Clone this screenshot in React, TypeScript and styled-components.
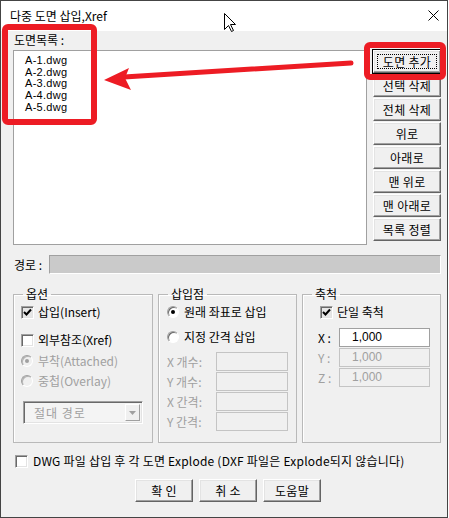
import React from "react";
import styled, { createGlobalStyle, css } from "styled-components";

const GlobalStyle = createGlobalStyle`
  html, body { margin: 0; padding: 0; background: #ffffff; }
  body {
    font-family: "Noto Sans CJK KR", "Liberation Sans", sans-serif;
    font-size: 12px;
    color: #000;
  }
  * { box-sizing: border-box; }
`;

const Window = styled.div`
  position: relative;
  width: 448px;
  height: 518px;
  border: 1px solid #444;
  background: #f0f0f0;
  display: flex;
  flex-direction: column;
  overflow: hidden;
`;

const TitleBar = styled.div`
  height: 30px;
  flex: 0 0 30px;
  background: #fff;
  display: flex;
  align-items: center;
  justify-content: space-between;
  padding: 0 8px 1px 9px;
`;

const TitleText = styled.span`
  font-size: 12px;
  line-height: 14px;
  color: #000;
`;

const Body = styled.div`
  flex: 1;
  display: flex;
  flex-direction: column;
  padding: 2px 6px 0 12px;
`;

const Label = styled.div<{ $disabled?: boolean }>`
  line-height: 14px;
  height: 14px;
  white-space: nowrap;
  color: ${(p) => (p.$disabled ? "#a0a0a0" : "#000")};
`;

const ListLabel = styled(Label)`
  margin: 0 0 3px 1px;
`;

const TopRow = styled.div`
  display: flex;
  gap: 6px;
  height: 195px;
`;

const ListBox = styled.div`
  flex: 0 0 354px;
  background: #fff;
  border: 1px solid #a0a0a0;
  padding: 3px 0 0 11px;
  font-family: "Liberation Sans", sans-serif;
  font-size: 11px;
`;

const ListItem = styled.div`
  line-height: 12px;
  height: 11.7px;
  letter-spacing: 0.3px;
`;

const ButtonColumn = styled.div`
  flex: 0 0 68px;
  display: flex;
  flex-direction: column;
  gap: 1px;
`;

const Button = styled.button<{ $focused?: boolean; $w?: number }>`
  position: relative;
  height: 23px;
  width: ${(p) => (p.$w ? `${p.$w}px` : "100%")};
  padding: 0;
  font-family: "Noto Sans CJK KR", sans-serif;
  font-size: 12px;
  letter-spacing: 0.3px;
  color: #000;
  background: #f0f0f0;
  border: 1px solid;
  border-color: #fff #646464 #646464 #fff;
  box-shadow: inset -1px -1px 0 #a0a0a0, inset 1px 1px 0 #e3e3e3;
  display: flex;
  align-items: center;
  justify-content: center;
  white-space: pre;
  ${(p) =>
    p.$focused &&
    css`
      outline: 1px solid #000;
      outline-offset: 0;
      &::after {
        content: "";
        position: absolute;
        inset: 3px;
        border: 1px dotted #000;
      }
    `}
`;

const PathRow = styled.div`
  margin-top: 10px;
  display: flex;
  align-items: center;
  height: 19px;
`;

const PathLabel = styled(Label)`
  flex: 0 0 36px;
  padding-left: 1px;
`;

const PathField = styled.div`
  flex: 1;
  height: 19px;
  background: #cacaca;
  border: 1px solid;
  border-color: #a0a0a0 #fff #fff #a0a0a0;
`;

const Groups = styled.div`
  margin-top: 13px;
  display: grid;
  grid-template-columns: 140px 139px 139px;
  column-gap: 5px;
`;

const Group = styled.fieldset`
  margin: 0;
  height: 156px;
  border: 1px solid #b9b9b9;
  box-shadow: inset 1px 1px 0 #fff;
  padding: 0;
  min-width: 0;
`;

const Legend = styled.legend`
  margin-left: 9px;
  padding: 0 3px;
  line-height: 14px;
  height: 14px;
  font-size: 12px;
`;

const GroupContent = styled.div<{ $pl: number }>`
  display: flex;
  flex-direction: column;
  align-items: flex-start;
  padding: 4px 0 0 ${(p) => p.$pl}px;
`;

const OptionRow = styled.div<{ $mt?: number; $ml?: number; $disabled?: boolean }>`
  display: flex;
  align-items: center;
  gap: 4px;
  height: 14px;
  line-height: 14px;
  white-space: nowrap;
  margin-top: ${(p) => p.$mt ?? 0}px;
  margin-left: ${(p) => p.$ml ?? 0}px;
  color: ${(p) => (p.$disabled ? "#a0a0a0" : "#000")};
`;

const RadioRow = styled(OptionRow)`
  gap: 5px;
`;

const Box = styled.span<{ $checked?: boolean }>`
  flex: 0 0 13px;
  width: 13px;
  height: 13px;
  border: 1px solid;
  border-color: #a0a0a0 #fff #fff #a0a0a0;
  box-shadow: inset 1px 1px 0 #696969, inset -1px -1px 0 #e3e3e3;
  background: ${(p) => (p.$checked ? "#e6e6e6" : "#fff")};
  display: inline-flex;
  align-items: center;
  justify-content: center;
`;

const RadioCircle = styled.span<{ $disabled?: boolean }>`
  flex: 0 0 12px;
  width: 12px;
  height: 12px;
  border-radius: 50%;
  border: 1px solid;
  border-color: #a0a0a0 #fff #fff #a0a0a0;
  box-shadow: inset 1px 1px 0 ${(p) => (p.$disabled ? "#b4b4b4" : "#696969")};
  background: ${(p) => (p.$disabled ? "#f0f0f0" : "#fff")};
  display: inline-flex;
  align-items: center;
  justify-content: center;
`;

const Dot = styled.span<{ $disabled?: boolean }>`
  width: 4px;
  height: 4px;
  border-radius: 50%;
  background: ${(p) => (p.$disabled ? "#a0a0a0" : "#000")};
`;

const Combo = styled.div`
  margin: 13px 0 0 2px;
  width: 120px;
  height: 23px;
  border: 1px solid;
  border-color: #a0a0a0 #fff #fff #a0a0a0;
  box-shadow: inset 1px 1px 0 #696969, inset -1px -1px 0 #e3e3e3;
  background: #f4f4f4;
  display: flex;
  align-items: center;
  padding: 2px;
`;

const ComboText = styled.span`
  flex: 1;
  color: #a0a0a0;
  padding-left: 8px;
  letter-spacing: 1px;
`;

const ComboButton = styled.span`
  flex: 0 0 15px;
  height: 17px;
  border: 1px solid;
  border-color: #fff #a0a0a0 #a0a0a0 #fff;
  background: #f0f0f0;
  display: flex;
  align-items: center;
  justify-content: center;
`;

const FieldGrid = styled.div<{ $mt: number; $labelW: number; $inputW: number }>`
  margin-top: ${(p) => p.$mt}px;
  display: grid;
  grid-template-columns: ${(p) => p.$labelW}px ${(p) => p.$inputW}px;
  grid-auto-rows: 19px;
  row-gap: 1px;
  align-items: center;
`;

const FieldLabel = styled.span<{ $disabled?: boolean }>`
  white-space: nowrap;
  color: ${(p) => (p.$disabled ? "#a0a0a0" : "#000")};
  font-size: 12px;
`;

const Input = styled.div<{ $disabled?: boolean }>`
  height: 19px;
  border: 1px solid ${(p) => (p.$disabled ? "#c4c4c4" : "#a0a0a0")};
  background: ${(p) => (p.$disabled ? "#f0f0f0" : "#fff")};
  color: ${(p) => (p.$disabled ? "#a0a0a0" : "#000")};
  padding-left: 12px;
  line-height: 17px;
  font-family: "Liberation Sans", sans-serif;
  font-size: 12px;
`;

const ExplodeRow = styled(OptionRow)`
  margin: 11px 0 0 2px;
  gap: 5px;
  letter-spacing: 0.22px;
`;

const ButtonRow = styled.div`
  margin-top: 11px;
  display: flex;
  justify-content: center;
  gap: 6px;
  padding-left: 2px;
`;

const Overlay = styled.svg`
  position: absolute;
  left: -1px;
  top: -1px;
  pointer-events: none;
`;

const Check = () => (
  <svg width="9" height="9" viewBox="0 0 9 9">
    <polyline points="1,4 3.5,6.5 8,1.5" fill="none" stroke="#000" strokeWidth="2" />
  </svg>
);

const CheckBox = ({ checked, label, mt, ml }: { checked?: boolean; label: string; mt?: number; ml?: number }) => (
  <OptionRow $mt={mt} $ml={ml}>
    <Box $checked={checked}>{checked && <Check />}</Box>
    <span>{label}</span>
  </OptionRow>
);

const Radio = ({ checked, disabled, label, mt }: { checked?: boolean; disabled?: boolean; label: string; mt?: number }) => (
  <RadioRow $mt={mt} $disabled={disabled}>
    <RadioCircle $disabled={disabled}>{checked && <Dot $disabled={disabled} />}</RadioCircle>
    <span>{label}</span>
  </RadioRow>
);

const files = ["A-1.dwg", "A-2.dwg", "A-3.dwg", "A-4.dwg", "A-5.dwg"];
const sideButtons = ["도면 추가", "선택 삭제", "전체 삭제", "위로", "아래로", "맨 위로", "맨 아래로", "목록 정렬"];

export default function App() {
  return (
    <>
      <GlobalStyle />
      <Window>
        <TitleBar>
          <TitleText>다중 도면 삽입,Xref</TitleText>
          <svg width="11" height="11" viewBox="0 0 11 11">
            <path d="M0.5 0.5 L10.5 10.5 M10.5 0.5 L0.5 10.5" stroke="#000" strokeWidth="1" />
          </svg>
        </TitleBar>
        <Body>
          <ListLabel>도면목록 :</ListLabel>
          <TopRow>
            <ListBox>
              {files.map((f) => (
                <ListItem key={f}>{f}</ListItem>
              ))}
            </ListBox>
            <ButtonColumn>
              {sideButtons.map((b, i) => (
                <Button key={b} $focused={i === 0}>
                  {b}
                </Button>
              ))}
            </ButtonColumn>
          </TopRow>
          <PathRow>
            <PathLabel>경로 :</PathLabel>
            <PathField />
          </PathRow>
          <Groups>
            <Group>
              <Legend>옵션</Legend>
              <GroupContent $pl={7}>
                <CheckBox checked label="삽입(Insert)" />
                <CheckBox label="외부참조(Xref)" mt={14} />
                <Radio checked disabled label="부착(Attached)" mt={7} />
                <Radio disabled label="중첩(Overlay)" mt={6} />
                <Combo>
                  <ComboText>절대 경로</ComboText>
                  <ComboButton>
                    <svg width="7" height="4" viewBox="0 0 7 4">
                      <polygon points="0,0 7,0 3.5,4" fill="#a0a0a0" />
                    </svg>
                  </ComboButton>
                </Combo>
              </GroupContent>
            </Group>
            <Group>
              <Legend>삽입점</Legend>
              <GroupContent $pl={8}>
                <Radio checked label="원래 좌표로 삽입" />
                <Radio label="지정 간격 삽입" mt={11} />
                <FieldGrid $mt={8} $labelW={49} $inputW={72}>
                  <FieldLabel $disabled>X 개수:</FieldLabel>
                  <Input $disabled />
                  <FieldLabel $disabled>Y 개수:</FieldLabel>
                  <Input $disabled />
                  <FieldLabel $disabled>X 간격:</FieldLabel>
                  <Input $disabled />
                  <FieldLabel $disabled>Y 간격:</FieldLabel>
                  <Input $disabled />
                </FieldGrid>
              </GroupContent>
            </Group>
            <Group>
              <Legend>축척</Legend>
              <GroupContent $pl={15}>
                <CheckBox checked label="단일 축척" ml={2} />
                <FieldGrid $mt={9} $labelW={21} $inputW={91}>
                  <FieldLabel>X :</FieldLabel>
                  <Input>1,000</Input>
                  <FieldLabel $disabled>Y :</FieldLabel>
                  <Input $disabled>1,000</Input>
                  <FieldLabel $disabled>Z :</FieldLabel>
                  <Input $disabled>1,000</Input>
                </FieldGrid>
              </GroupContent>
            </Group>
          </Groups>
          <ExplodeRow>
            <Box />
            <span>DWG 파일 삽입 후 각 도면 Explode (DXF 파일은 Explode되지 않습니다)</span>
          </ExplodeRow>
          <ButtonRow>
            <Button $w={58}>{"확 인"}</Button>
            <Button $w={58}>{"취 소"}</Button>
            <Button $w={58}>도움말</Button>
          </ButtonRow>
        </Body>
        <Overlay width="449" height="518" viewBox="0 0 449 518">
          <rect x="5" y="27" width="89" height="95" rx="3" fill="none" stroke="#ed1c24" strokeWidth="6" />
          <rect x="367" y="45" width="76" height="32" rx="3" fill="none" stroke="#ed1c24" strokeWidth="6" />
          <line x1="351" y1="63" x2="124" y2="77" stroke="#ed1c24" strokeWidth="5" strokeLinecap="round" />
          <polygon points="104,80 129,68 125,78 131,90" fill="#ed1c24" />
          <path
            d="M224.5 13.5 L224.5 29.5 L228.5 25.5 L231.5 31.5 L233.5 30.5 L230.5 24.5 L235.5 24.5 Z"
            fill="#fff"
            stroke="#000"
            strokeWidth="1"
            strokeLinejoin="miter"
          />
        </Overlay>
      </Window>
    </>
  );
}
